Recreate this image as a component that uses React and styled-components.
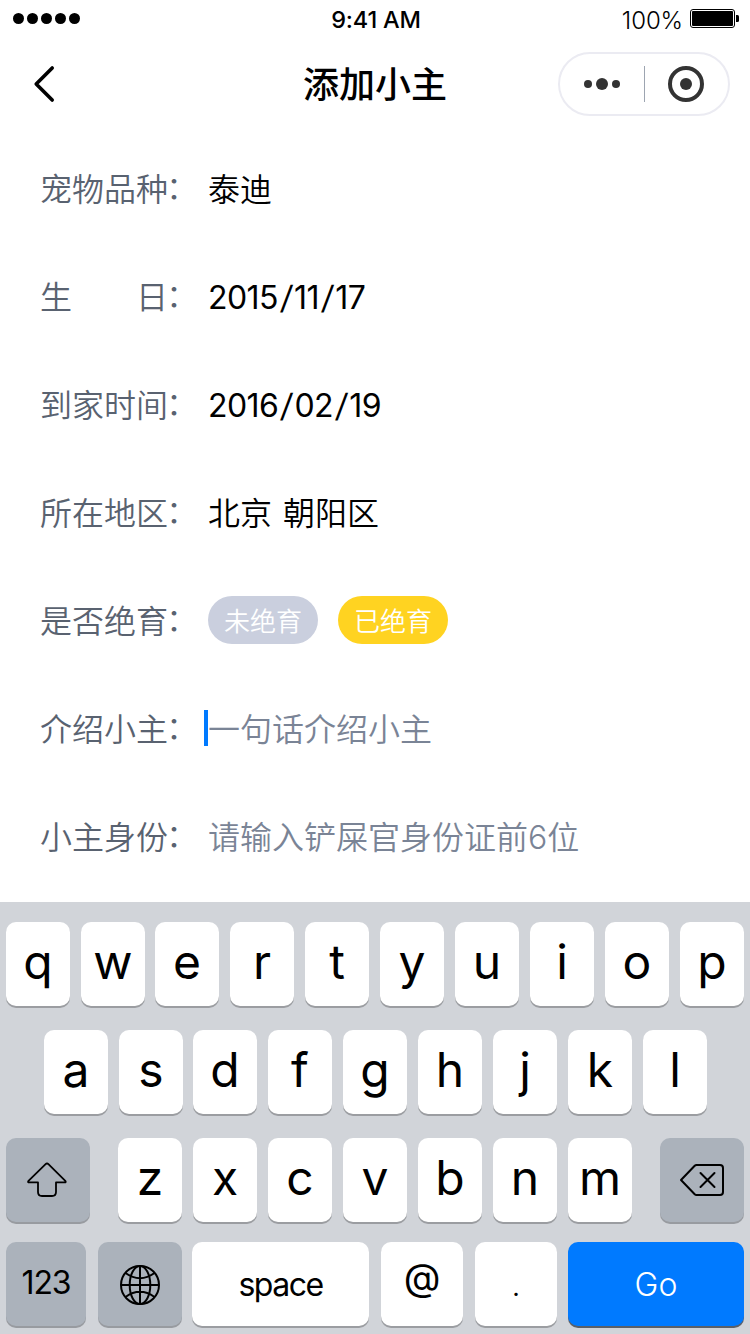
import React from "react";
import styled, { createGlobalStyle } from "styled-components";

const GlobalStyle = createGlobalStyle`
  * { box-sizing: border-box; }
  body {
    margin: 0;
    background: #fff;
    font-family: Inter, "Noto Sans CJK SC", sans-serif;
    color: #000;
  }
`;

const Screen = styled.div`
  width: 750px;
  height: 1334px;
  display: flex;
  flex-direction: column;
  overflow: hidden;
  background: #fff;
`;

const StatusBar = styled.div`
  flex: none;
  height: 40px;
  padding: 0 11px 0 13px;
  display: grid;
  grid-template-columns: 1fr auto 1fr;
  grid-template-rows: 40px;
  align-items: center;
  font-size: 24px;
  line-height: 32px;
`;

const Signal = styled.div`
  display: flex;
  gap: 3px;
  padding-bottom: 3px;
`;

const SignalDot = styled.span`
  width: 11px;
  height: 11px;
  border-radius: 50%;
  background: #000;
`;

const Clock = styled.div`
  font-weight: 500;
  font-size: 23.5px;
  letter-spacing: -0.2px;
`;

const Power = styled.div`
  display: flex;
  justify-content: flex-end;
  align-items: center;
  gap: 7px;
  padding-bottom: 2px;
`;

const Percent = styled.span`
  font-weight: 350;
  letter-spacing: -0.1px;
  padding-top: 4px;
`;

const NavBar = styled.div`
  flex: none;
  height: 88px;
  padding: 0 20px;
  display: grid;
  grid-template-columns: 1fr auto 1fr;
  align-items: center;
`;

const BackButton = styled.div`
  display: flex;
  padding-left: 12px;
`;

const Title = styled.h1`
  margin: 0;
  padding-top: 2px;
  font-size: 36px;
  line-height: 52px;
  font-weight: 500;
`;

const Capsule = styled.div`
  justify-self: end;
  width: 172px;
  height: 64px;
  border: 2px solid #ebebf2;
  border-radius: 32px;
  display: flex;
  align-items: center;
`;

const Form = styled.div`
  flex: none;
  height: 774px;
  padding: 8px 40px 0;
`;

const Field = styled.div`
  height: 108px;
  display: flex;
  align-items: center;
  font-size: 32px;
  font-weight: 350;
  line-height: 48px;
`;

const Label = styled.div`
  width: 168px;
  display: flex;
  color: #596270;
  white-space: pre;
`;

const Colon = styled.span`
  position: relative;
  top: -2px;
  left: -2px;
`;

const Value = styled.div`
  color: ${(p) => (p.$hint ? "#7a8496" : "#000")};
  word-spacing: 2px;
  white-space: pre;
`;

const DateValue = styled(Value)`
  font-weight: 400;
  letter-spacing: -0.6px;
`;

const Slash = styled.span`
  display: inline-block;
  margin: 0 2.600px 0 2.800px;
  transform: skewX(-6deg);
`;

const Caret = styled.span`
  width: 4px;
  height: 36px;
  margin: -4px 0 0 -4px;
  background: #007aff;
`;

const Choices = styled.div`
  display: flex;
  gap: 20px;
  padding-bottom: 4px;
`;

const Choice = styled.span`
  width: 110px;
  height: 48px;
  border-radius: 24px;
  background: ${(p) => (p.$active ? "#ffd321" : "#cacfde")};
  color: #fff;
  font-size: 26px;
  line-height: 52px;
  text-align: center;
`;

const Keyboard = styled.div`
  flex: 1;
  background: #d1d4d9;
  padding: 20px 6px 0;
  display: flex;
  flex-direction: column;
`;

const KeyRow = styled.div`
  display: flex;
  gap: ${(p) => p.$gap || 11}px;
  margin: 0 ${(p) => p.$inset || 0}px ${(p) => (p.$tight ? 20 : 24)}px;
`;

const LetterGroup = styled.div`
  display: flex;
  gap: 11px;
`;

const fills = { light: "#fff", dark: "#abb2bb", blue: "#007aff" };
const edges = { light: "#9b9da1", dark: "#989ba0", blue: "#5a6069" };

const Key = styled.div`
  width: ${(p) => p.$w || 64}px;
  height: 84px;
  flex: none;
  display: flex;
  align-items: center;
  justify-content: center;
  margin-left: ${(p) => p.$pull || 0}px;
  padding: ${(p) => p.$drop || 0}px 0 ${(p) => p.$lift || 0}px;
  border-radius: 10px;
  background: ${(p) => fills[p.$tone || "light"]};
  box-shadow: 0 2px 0 ${(p) => edges[p.$tone || "light"]};
  color: ${(p) => (p.$tone === "blue" ? "#fff" : "#000")};
  font-size: ${(p) => p.$size || 32}px;
  font-weight: ${(p) => p.$weight || 400};
  letter-spacing: ${(p) => p.$track || 0}px;
  line-height: 1.2;
`;

const LetterKey = ({ children, pull }) => (
  <Key $size={48} $lift={5} $pull={pull}>{children}</Key>
);

const Entry = ({ label, children }) => (
  <Field>
    <Label>{label}<Colon>：</Colon></Label>
    {children}
  </Field>
);

const DateText = ({ year, month, day }) => (
  <DateValue>
    {year}<Slash>/</Slash>{month}<Slash>/</Slash>{day}
  </DateValue>
);

const BackIcon = () => (
  <svg width="24" height="40" viewBox="0 0 24 40" fill="none" stroke="#000" strokeWidth="3.6" strokeLinecap="round" strokeLinejoin="round">
    <path d="M20.200 4 4.200 20l16 16" />
  </svg>
);

const BatteryIcon = () => (
  <svg width="49" height="20" viewBox="0 0 49 20">
    <rect x="0.5" y="0.5" width="44" height="18" rx="2.5" fill="#fff" stroke="#000" />
    <rect x="2" y="2" width="41" height="15" rx="1" />
    <path d="M46 6h1.500a1.500 1.500 0 0 1 1.500 1.500v4a1.500 1.500 0 0 1-1.500 1.500H46z" />
  </svg>
);

const CapsuleIcons = () => (
  <svg width="168" height="60" viewBox="0 0 168 60" fill="#333">
    <circle cx="28" cy="30" r="4" />
    <circle cx="42" cy="30" r="6" />
    <circle cx="56" cy="30" r="4" />
    <rect x="84" y="12" width="1" height="36" fill="#9da5b1" />
    <circle cx="126" cy="30" r="16" fill="none" stroke="#333" strokeWidth="4" />
    <circle cx="126" cy="30" r="6" />
  </svg>
);

const ShiftIcon = () => (
  <svg width="45" height="36" viewBox="0 0 45 36" fill="none" stroke="#000" strokeWidth="1.800" strokeLinejoin="round">
    <path d="M19.600 2.200q1.400-1.400 2.800 0L39.300 18.800q1.200 1.600-.8 1.600H30V30q0 4-4 4H16q-4 0-4-4V20.400H3.300q-2 0-.8-1.600z" />
  </svg>
);

const DeleteIcon = () => (
  <svg width="46" height="34" viewBox="0 0 46 34" fill="none" stroke="#000" strokeWidth="2" strokeLinejoin="round" strokeLinecap="round">
    <path d="M17.500 2H41q3 0 3 3v24q0 3-3 3H17.500q-1 0-1.800-.8L2 17 15.700 2.800Q16.500 2 17.500 2z" />
    <path d="m21.500 10 14 14M35.500 10l-14 14" />
  </svg>
);

const GlobeIcon = () => (
  <svg width="42" height="42" viewBox="0 0 42 42" fill="none" stroke="#000" strokeWidth="2">
    <circle cx="21" cy="21" r="19" />
    <ellipse cx="21" cy="21" rx="10.300" ry="19" />
    <path d="M21 2v38M2 21h38M6.500 9q14.500 10.500 29 0M6.500 33q14.500-10.500 29 0" />
  </svg>
);

export default function App() {
  return (
    <Screen>
      <GlobalStyle />
      <StatusBar>
        <Signal>
          {[0, 1, 2, 3, 4].map((n) => <SignalDot key={n} />)}
        </Signal>
        <Clock>9:41 AM</Clock>
        <Power>
          <Percent>100%</Percent>
          <BatteryIcon />
        </Power>
      </StatusBar>
      <NavBar>
        <BackButton><BackIcon /></BackButton>
        <Title>添加小主</Title>
        <Capsule><CapsuleIcons /></Capsule>
      </NavBar>
      <Form>
        <Entry label="宠物品种"><Value>泰迪</Value></Entry>
        <Entry label={"生\u3000\u3000日"}><DateText year="2015" month="11" day="17" /></Entry>
        <Entry label="到家时间"><DateText year="2016" month="02" day="19" /></Entry>
        <Entry label="所在地区"><Value>北京 朝阳区</Value></Entry>
        <Entry label="是否绝育">
          <Choices>
            <Choice>未绝育</Choice>
            <Choice $active>已绝育</Choice>
          </Choices>
        </Entry>
        <Entry label="介绍小主">
          <Caret />
          <Value $hint>一句话介绍小主</Value>
        </Entry>
        <Entry label="小主身份"><Value $hint>请输入铲屎官身份证前6位</Value></Entry>
      </Form>
      <Keyboard>
        <KeyRow>
          {[..."qwertyuiop"].map((c, i) => (
            <LetterKey key={c} pull={i === 2 ? -1 : 0}>{c}</LetterKey>
          ))}
        </KeyRow>
        <KeyRow $inset={38}>
          {[..."asdfghjkl"].map((c, i) => (
            <LetterKey key={c} pull={i === 2 ? -1 : 0}>{c}</LetterKey>
          ))}
        </KeyRow>
        <KeyRow $tight $gap={28}>
          <Key $w={84} $tone="dark"><ShiftIcon /></Key>
          <LetterGroup>
            {[..."zxcvbnm"].map((c) => <LetterKey key={c}>{c}</LetterKey>)}
          </LetterGroup>
          <Key $w={84} $tone="dark"><DeleteIcon /></Key>
        </KeyRow>
        <KeyRow $gap={12}>
          <Key $w={80} $tone="dark" $lift={1} $track={-1.1}>123</Key>
          <Key $w={84} $tone="dark" $drop={2}><GlobeIcon /></Key>
          <Key $w={177} $pull={-2} $drop={3} $track={-1.500}>space</Key>
          <Key $w={82} $size={38} $lift={12}>@</Key>
          <Key $w={82} $drop={3} $weight={350}>.</Key>
          <Key $w={176} $pull={-1} $drop={3} $tone="blue" $weight={350}>Go</Key>
        </KeyRow>
      </Keyboard>
    </Screen>
  );
}
